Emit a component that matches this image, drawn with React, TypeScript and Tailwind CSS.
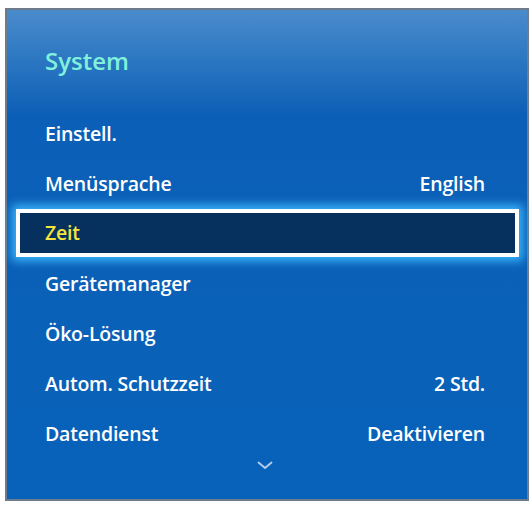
import React from "react";

const rows: { label: string; value?: string; active?: boolean }[] = [
  { label: "Einstell." },
  { label: "Menüsprache", value: "English" },
  { label: "Zeit", active: true },
  { label: "Gerätemanager" },
  { label: "Öko-Lösung" },
  { label: "Autom. Schutzzeit", value: "2 Std." },
  { label: "Datendienst", value: "Deaktivieren" },
];

export default function App() {
  return (
    <div
      className="w-[532px] h-[506px] bg-white pt-[8px] pl-[5px]"
      style={{ fontFamily: '"Open Sans", "Noto Sans", sans-serif' }}
    >
      <div className="w-[524px] h-[493px] border-2 border-[#6e7b8b] bg-[linear-gradient(180deg,#4a8bcb_0px,#2f79c3_45px,#0c5fb6_105px,#0862b9_100%)] flex flex-col">
        <div className="pt-[35px] pl-[38px] h-[99px] text-[24px] leading-[32px] font-semibold text-[#80f1da]">
          System
        </div>
        <div className="flex flex-col pl-[9px] pr-[8px]">
          {rows.map((r) =>
            r.active ? (
              <div key={r.label} className="h-[50px] flex flex-col">
                <div className="h-[48px] border-4 border-white bg-[#06315f] shadow-[0_0_9px_4px_rgba(60,185,255,0.95)] flex items-center justify-between pl-[25px] pr-[30px] text-[19.5px] tracking-[-0.2px] font-semibold text-[#f5e43a]">
                  <span>{r.label}</span>
                  {r.value && <span>{r.value}</span>}
                </div>
              </div>
            ) : (
              <div
                key={r.label}
                className="h-[50px] flex items-center justify-between pl-[29px] pr-[34px] text-[19.5px] tracking-[-0.2px] font-semibold text-white"
              >
                <span>{r.label}</span>
                {r.value && <span>{r.value}</span>}
              </div>
            )
          )}
        </div>
        <div className="flex justify-center pt-[2px]">
          <svg width="16" height="9" viewBox="0 0 16 9" className="ml-[-4px]">
            <path d="M1.5 1.5 L8 7 L14.5 1.5" fill="none" stroke="#b4d0ee" strokeWidth="1.8" strokeLinecap="round" strokeLinejoin="round" />
          </svg>
        </div>
      </div>
    </div>
  );
}
